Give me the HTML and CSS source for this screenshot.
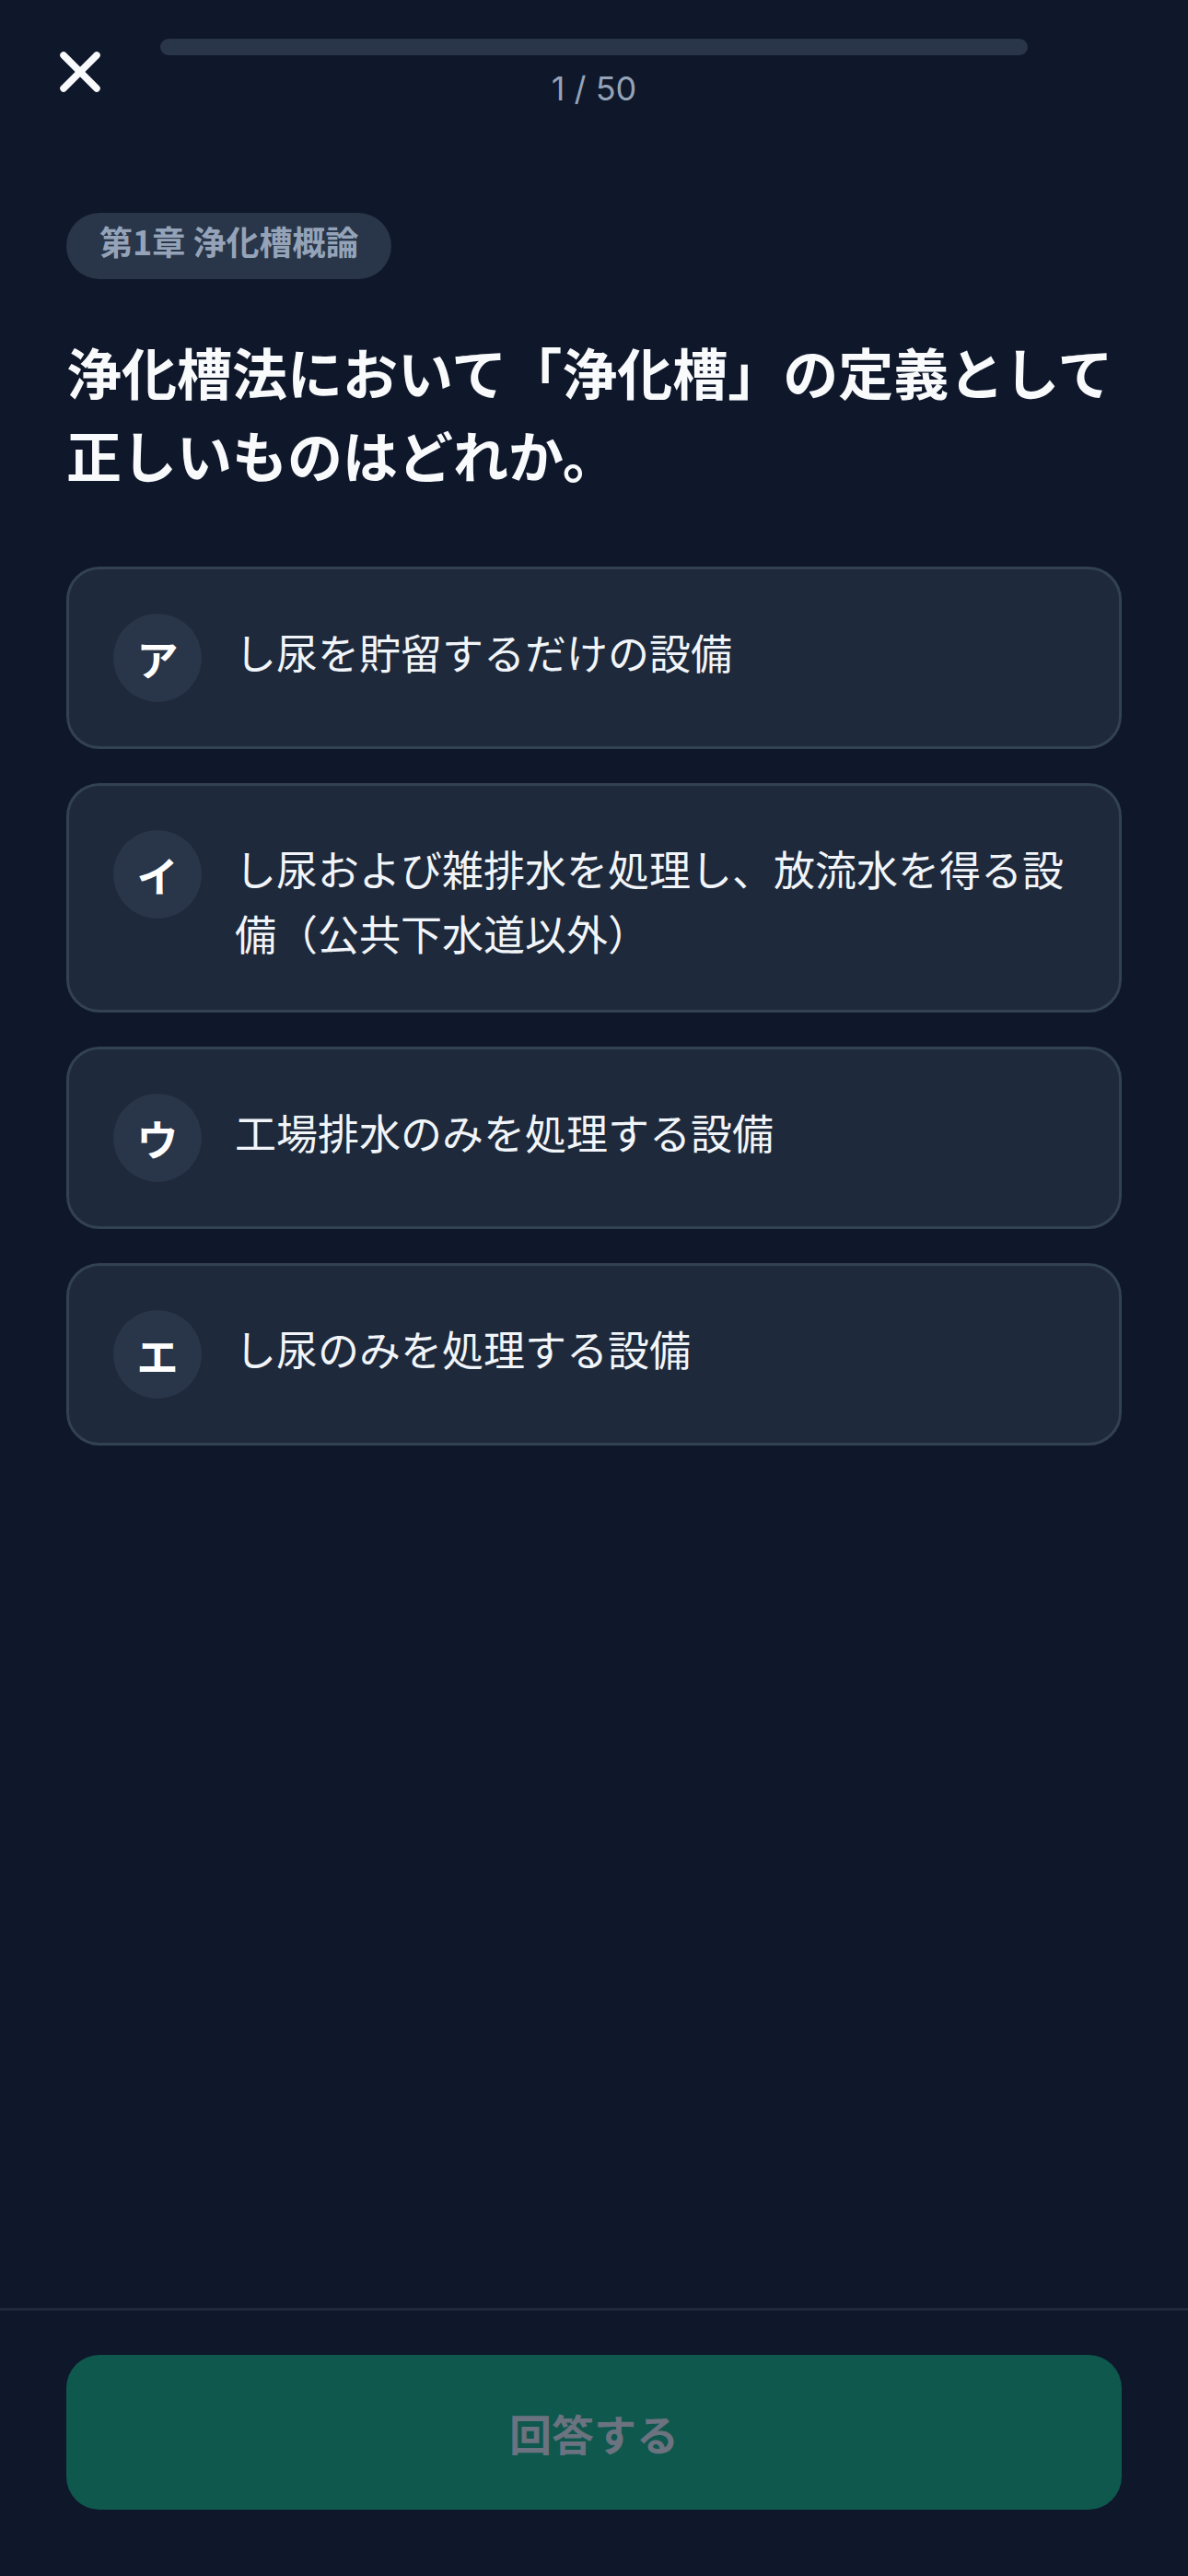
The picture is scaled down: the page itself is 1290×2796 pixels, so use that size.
FILE: index.html
```html
<!DOCTYPE html>
<html lang="ja">
<head>
    <meta charset="UTF-8">
    <title>浄化槽 問題</title>
    <link rel="stylesheet" href="styles.css">
</head>
<body>

<div class="app">
    <header class="quiz-header">
        <button class="close-btn" type="button" aria-label="閉じる">
            <svg viewBox="0 0 24 24" width="72" height="72" fill="none" stroke="currentColor" stroke-width="2.5" stroke-linecap="round" stroke-linejoin="round">
                <path d="M18 6 6 18"/>
                <path d="M6 6l12 12"/>
            </svg>
        </button>
        <div class="progress">
            <div class="progress-track"><div class="progress-fill" style="width:0%"></div></div>
            <div class="progress-count">1 / 50</div>
        </div>
        <div></div>
    </header>

    <main class="quiz-main">
        <span class="chapter">第1章 浄化槽概論</span>

        <h1 class="question">浄化槽法において「浄化槽」の定義として正しいものはどれか。</h1>

        <div class="choices">
            <div class="choice">
                <span class="choice-key">ア</span>
                <span class="choice-text">し尿を貯留するだけの設備</span>
            </div>
            <div class="choice">
                <span class="choice-key">イ</span>
                <span class="choice-text">し尿および雑排水を処理し、放流水を得る設備（公共下水道以外）</span>
            </div>
            <div class="choice">
                <span class="choice-key">ウ</span>
                <span class="choice-text">工場排水のみを処理する設備</span>
            </div>
            <div class="choice">
                <span class="choice-key">エ</span>
                <span class="choice-text">し尿のみを処理する設備</span>
            </div>
        </div>
    </main>

    <footer class="quiz-footer">
        <button class="answer-btn" type="button" disabled>回答する</button>
    </footer>
</div>

</body>
</html>
```

FILE: styles.css
```css
body {
    margin: 0;
    background-color: #0f172a;
    font-family: "Noto Sans CJK JP", "Inter", sans-serif;
    color: #f8fafc;
}

.app {
    min-height: 2796px;
    display: flex;
    flex-direction: column;
}

/* header with close + progress */
.quiz-header {
    display: grid;
    grid-template-columns: 174px 1fr 174px;
    align-items: start;
    padding-top: 42px;
}

.close-btn {
    justify-self: center;
    width: 72px;
    height: 72px;
    padding: 0;
    border: none;
    background: none;
    color: #f8fafc;
    cursor: pointer;
}

.close-btn svg {
    display: block;
}

.progress-track {
    height: 18px;
    border-radius: 9px;
    background-color: #293548;
    overflow: hidden;
}

.progress-fill {
    height: 100%;
    background-color: #10b981;
}

.progress-count {
    margin-top: 12px;
    text-align: center;
    font-family: "Inter", sans-serif;
    font-size: 36px;
    line-height: 48px;
    color: #94a3b8;
}

/* question */
.quiz-main {
    flex: 1;
    padding: 111px 72px 0 72px;
}

.chapter {
    display: inline-block;
    line-height: 60px;
    padding: 0 36px 12px 36px;
    border-radius: 36px;
    background-color: #293548;
    color: #94a3b8;
    font-size: 36px;
    font-weight: 700;
}

.question {
    margin: 55px 0 0 0;
    font-size: 60px;
    line-height: 90px;
    font-weight: 700;
    color: #f8fafc;
}

.choices {
    margin-top: 77px;
    display: flex;
    flex-direction: column;
    gap: 37px;
}

.choice {
    display: flex;
    align-items: flex-start;
    gap: 36px;
    padding: 48px;
    border: 3px solid #334155;
    border-radius: 36px;
    background-color: #1e293b;
    cursor: pointer;
}

.choice-key {
    flex: none;
    width: 96px;
    height: 96px;
    border-radius: 50%;
    background-color: #293548;
    display: flex;
    align-items: center;
    justify-content: center;
    font-size: 45px;
    font-weight: 700;
    color: #ffffff;
}

.choice-text {
    padding-top: 7px;
    font-size: 45px;
    line-height: 70px;
    color: #f1f5f9;
}

/* bottom action */
.quiz-footer {
    border-top: 3px solid #1e293b;
    padding: 48px 72px 72px 72px;
}

.answer-btn {
    display: block;
    width: 100%;
    height: 168px;
    border: none;
    border-radius: 36px;
    background-color: #0f584d;
    color: #6b7280;
    font-family: "Noto Sans CJK JP", sans-serif;
    font-size: 46px;
    font-weight: 700;
}
```
